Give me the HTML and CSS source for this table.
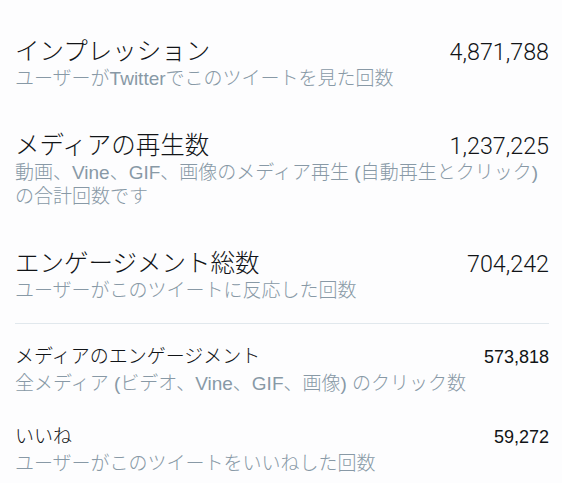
FILE: index.html
```html
<!DOCTYPE html>
<html lang="ja">
<head>
<meta charset="utf-8">
<link rel="stylesheet" href="styles.css">
</head>
<body>
<div class="list">
  <div class="row big">
    <div class="head"><span class="title">インプレッション</span><span class="num">4,871,788</span></div>
    <div class="desc">ユーザーがTwitterでこのツイートを見た回数</div>
  </div>
  <div class="row big">
    <div class="head"><span class="title">メディアの再生数</span><span class="num">1,237,225</span></div>
    <div class="desc">動画、Vine、GIF、画像のメディア再生 (自動再生とクリック) の合計回数です</div>
  </div>
  <div class="row big">
    <div class="head"><span class="title">エンゲージメント総数</span><span class="num">704,242</span></div>
    <div class="desc">ユーザーがこのツイートに反応した回数</div>
  </div>
  <div class="divider"></div>
  <div class="row small">
    <div class="head"><span class="title">メディアのエンゲージメント</span><span class="num">573,818</span></div>
    <div class="desc">全メディア (ビデオ、Vine、GIF、画像) のクリック数</div>
  </div>
  <div class="row small">
    <div class="head"><span class="title">いいね</span><span class="num">59,272</span></div>
    <div class="desc">ユーザーがこのツイートをいいねした回数</div>
  </div>
</div>
</body>
</html>
```

FILE: styles.css
```css
html, body {
  margin: 0;
  padding: 0;
  background: #fdfdfe;
}
body {
  font-family: "Liberation Sans", "Noto Sans CJK JP", sans-serif;
  color: #111417;
}
.list {
  padding: 37px 13px 0 15px;
  display: flex;
  flex-direction: column;
}
.row {
  display: flex;
  flex-direction: column;
}
.big + .big {
  margin-top: 40px;
}
.head {
  display: flex;
  justify-content: space-between;
  align-items: baseline;
}
.title {
  font-weight: 300;
}
.big .title {
  font-size: 24.5px;
  line-height: 30px;
}
.big .num {
  font-family: "Roboto", "Liberation Sans", sans-serif;
  font-weight: 300;
  font-size: 23.3px;
  line-height: 30px;
}
.small .title {
  font-size: 19px;
  line-height: 30px;
}
.small .num {
  font-family: "Liberation Sans", sans-serif;
  font-size: 18px;
  line-height: 30px;
}
.desc {
  font-size: 19px;
  line-height: 24px;
  color: #8899a6;
  font-weight: 300;
  padding-right: 10px;
}
.divider {
  height: 1px;
  background: #e1e8ed;
  margin: 20px 0 18px;
}
.small + .small {
  margin-top: 26px;
}
```
